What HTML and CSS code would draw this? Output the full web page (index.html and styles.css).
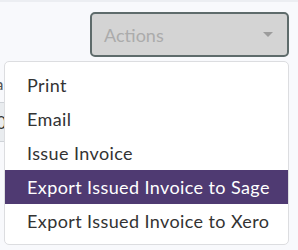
FILE: index.html
```html
<!DOCTYPE html>
<html lang="en">
<head>
    <meta charset="UTF-8">
    <meta name="viewport" content="width=device-width, initial-scale=1.0">
    <title>Invoice Actions</title>
    <link rel="stylesheet" href="styles.css">
</head>
<body>
    <div class="top-strip"></div>
    <div class="toolbar">
        <button class="actions-select" disabled>
            <span>Actions</span>
            <span class="caret"></span>
        </button>
    </div>
    <div class="form-behind">
        <div class="field-label">Data</div>
        <div class="field-input">0</div>
    </div>

    <ul class="actions-menu">
        <li>Print</li>
        <li>Email</li>
        <li>Issue Invoice</li>
        <li class="active">Export Issued Invoice to Sage</li>
        <li>Export Issued Invoice to Xero</li>
    </ul>
</body>
</html>
```

FILE: styles.css
```css
body {
    margin: 0;
    background-color: #f8f9fc;
    font-family: 'Lato', sans-serif;
    color: #333;
    position: relative;
    height: 250px;
    overflow: hidden;
}

.top-strip {
    height: 2px;
    background-color: #eceef2;
}

.toolbar {
    display: flex;
    justify-content: flex-end;
    padding: 10px 9px 0 0;
}

.actions-select {
    display: flex;
    align-items: center;
    justify-content: space-between;
    width: 199px;
    height: 45px;
    box-sizing: border-box;
    padding: 0 14px 0 12px;
    background-color: #d4d4d4;
    border: 2px solid #5e6b6b;
    border-radius: 5px;
    font-family: inherit;
    font-size: 18px;
    color: #ababab;
}

.caret {
    width: 0;
    height: 0;
    border-left: 5px solid transparent;
    border-right: 5px solid transparent;
    border-top: 5px solid #9c9c9c;
}

.form-behind {
    margin: 17px 0 0 -30px;
}

.field-label {
    font-size: 16px;
    color: #555;
    height: 28px;
}

.field-input {
    width: 200px;
    height: 40px;
    box-sizing: border-box;
    border-top: 1px solid #cfd3d8;
    border-bottom: 1px solid #cfd3d8;
    background-color: #e9ecef;
    padding: 8px 0 0 26px;
    font-size: 18px;
}

.actions-menu {
    position: absolute;
    top: 61px;
    left: 4px;
    width: 285px;
    box-sizing: border-box;
    margin: 0;
    padding: 6px 0;
    list-style: none;
    background-color: #fff;
    border: 1px solid #dcdde0;
    border-radius: 5px;
}

.actions-menu li {
    height: 34px;
    line-height: 34px;
    padding-left: 22px;
    font-size: 18px;
    letter-spacing: 0.4px;
    color: #333;
}

.actions-menu li.active {
    background-color: #4f3a72;
    color: #fff;
}
```
